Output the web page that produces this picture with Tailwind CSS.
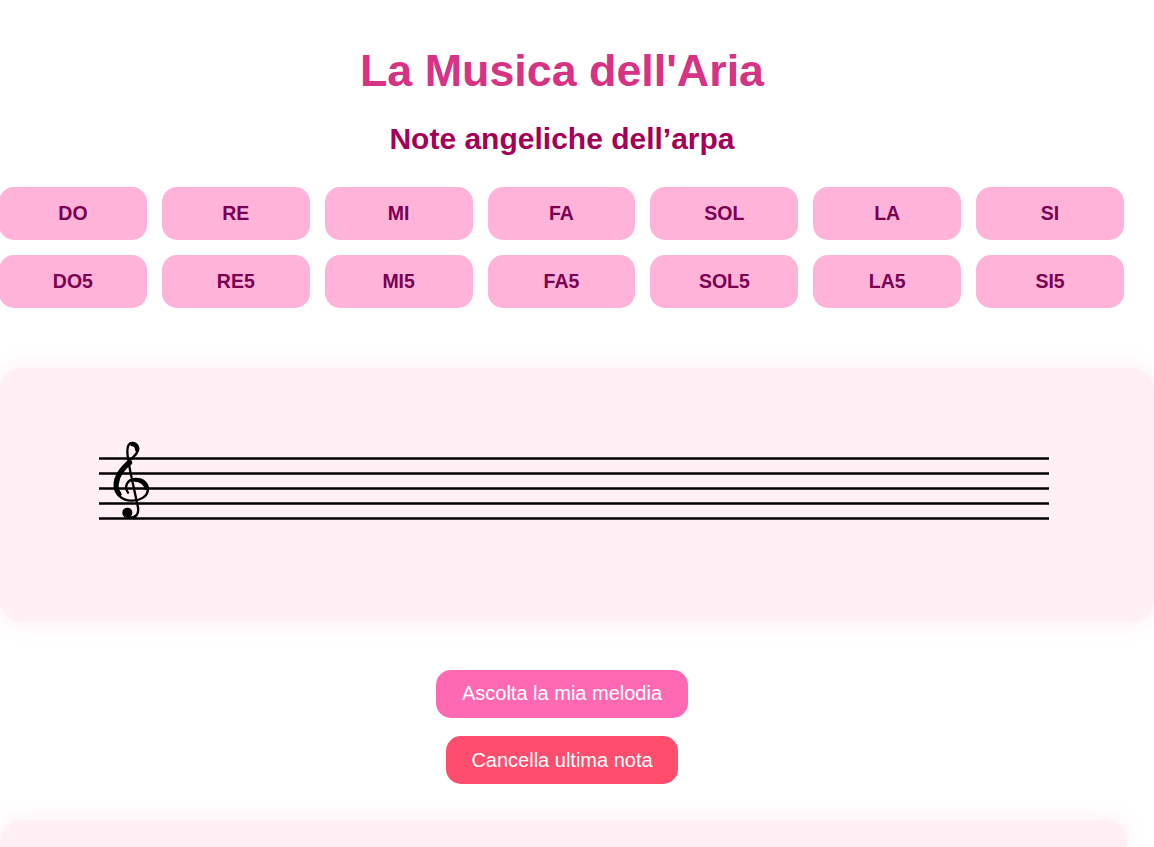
<!DOCTYPE html>
<html lang="it">
<head>
  <meta charset="UTF-8" />
  <meta name="viewport" content="width=device-width, initial-scale=1.0"/>
  <title>La Musica dell'Aria</title>
  <script src="https://cdn.jsdelivr.net/npm/@tailwindcss/browser@4"></script>
</head>
<body class="bg-white font-['Liberation_Sans',Arial,sans-serif] h-[847px] overflow-hidden">
  <div class="w-[1124px]">
    <h1 class="pt-[45px] text-center text-[44.8px] leading-[50px] font-bold text-[#d63384]">La Musica dell'Aria</h1>
    <h2 class="mt-[27px] text-center text-[30px] leading-[33px] font-bold text-[#a50057]">Note angeliche dell’arpa</h2>

    <div class="mt-[32px] -ml-[1px] w-[1125px] grid grid-cols-7 gap-[15px]">
      <button class="h-[53px] rounded-[15px] bg-[#ffb3d9] text-[#7a0052] text-[19.5px] font-bold">DO</button>
      <button class="h-[53px] rounded-[15px] bg-[#ffb3d9] text-[#7a0052] text-[19.5px] font-bold">RE</button>
      <button class="h-[53px] rounded-[15px] bg-[#ffb3d9] text-[#7a0052] text-[19.5px] font-bold">MI</button>
      <button class="h-[53px] rounded-[15px] bg-[#ffb3d9] text-[#7a0052] text-[19.5px] font-bold">FA</button>
      <button class="h-[53px] rounded-[15px] bg-[#ffb3d9] text-[#7a0052] text-[19.5px] font-bold">SOL</button>
      <button class="h-[53px] rounded-[15px] bg-[#ffb3d9] text-[#7a0052] text-[19.5px] font-bold">LA</button>
      <button class="h-[53px] rounded-[15px] bg-[#ffb3d9] text-[#7a0052] text-[19.5px] font-bold">SI</button>
      <button class="h-[53px] rounded-[15px] bg-[#ffb3d9] text-[#7a0052] text-[19.5px] font-bold">DO5</button>
      <button class="h-[53px] rounded-[15px] bg-[#ffb3d9] text-[#7a0052] text-[19.5px] font-bold">RE5</button>
      <button class="h-[53px] rounded-[15px] bg-[#ffb3d9] text-[#7a0052] text-[19.5px] font-bold">MI5</button>
      <button class="h-[53px] rounded-[15px] bg-[#ffb3d9] text-[#7a0052] text-[19.5px] font-bold">FA5</button>
      <button class="h-[53px] rounded-[15px] bg-[#ffb3d9] text-[#7a0052] text-[19.5px] font-bold">SOL5</button>
      <button class="h-[53px] rounded-[15px] bg-[#ffb3d9] text-[#7a0052] text-[19.5px] font-bold">LA5</button>
      <button class="h-[53px] rounded-[15px] bg-[#ffb3d9] text-[#7a0052] text-[19.5px] font-bold">SI5</button>
    </div>
  </div>

  <div class="mt-[60px] w-[1154px] h-[254px] rounded-[22px] bg-[#fff0f5] shadow-[0_0_24px_3px_#fff0f5] pt-[72px] pl-[99px]">
    <svg class="block overflow-visible" width="950" height="84" viewBox="0 0 950 84" fill="none">
      <g stroke="#000" stroke-width="2.3">
        <path d="M0 18.5H950"/>
        <path d="M0 33.5H950"/>
        <path d="M0 48.5H950"/>
        <path d="M0 63.5H950"/>
        <path d="M0 78.5H950"/>
      </g>
      <g transform="translate(-11 -10) scale(0.3333)" stroke="#000" stroke-linecap="round" stroke-linejoin="round">
        <path stroke-width="7" d="M120 188C108 172 116 148 142 147C166 146 180 160 180 178C179 200 155 213 130 212C100 211 80 190 80 165C80 135 100 112 126 90C142 76 152 66 151 54C150 44 141 38 131 39C122 40 118 50 118 64C118 80 122 100 128 130L150 232C153 250 145 263 128 263C118 263 110 258 108 252"/>
        <path stroke-width="14" d="M126 98C106 113 87 135 85 165C84 176 88 186 94 193"/>
        <path stroke-width="10" d="M140 150C156 150 172 160 175 176"/>
        <path stroke-width="10" d="M146 60C146 48 140 44 132 44"/>
        <circle cx="118" cy="248" r="15" fill="#000" stroke="none"/>
      </g>
    </svg>
  </div>

  <div class="w-[1124px] mt-[48px] flex flex-col items-center gap-[18px]">
    <button class="h-[48px] px-[25.5px] pb-[2px] rounded-[15px] bg-[#ff69b4] text-white text-[20px]">Ascolta la mia melodia</button>
    <button class="h-[48px] px-[25px] rounded-[15px] bg-[#ff4d6d] text-white text-[20px]">Cancella ultima nota</button>
  </div>

  <div class="mt-[36px] w-[1127px] h-[27px] rounded-t-[22px] bg-[#fff0f5] shadow-[0_0_24px_3px_#fff0f5]"></div>
</body>
</html>
